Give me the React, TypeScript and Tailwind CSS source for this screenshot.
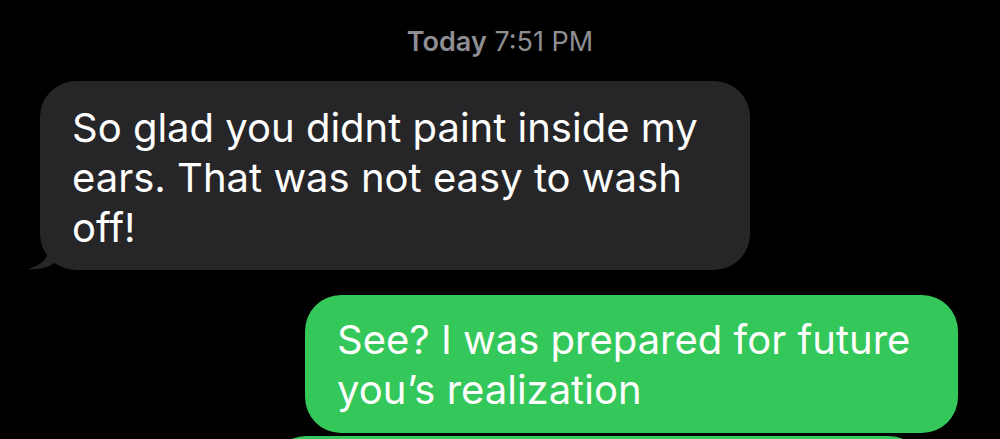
import React from 'react';

function Tail({color}: {color: string}) {
    return (
        <svg width="30" height="30" viewBox="0 0 30 30" className="absolute left-[-12px] bottom-0">
            <path d="M22 0 C22 14 18 24 0 29 C10 30 20 28 28 22 L28 0 Z" fill={color}/>
        </svg>
    );
}

export default function App() {
    return (
        <div className="w-[1000px] h-[439px] overflow-hidden bg-black text-white" style={{fontFamily: 'Inter, "Noto Sans", sans-serif'}}>
            <div className="pt-[26px] h-[81px] text-center text-[27px] leading-[32px] text-[#8e8e93]">
                <span className="font-semibold">Today</span> 7:51 PM
            </div>

            <div className="pl-[40px]">
                <div className="relative w-[710px] rounded-[36px] bg-[#262629] pl-[32px] pr-[30px] pt-[22px] pb-[17px] text-[40px] leading-[50px]">
                    <Tail color="#262629"/>
                    So glad you didnt paint inside my ears. That was not easy to wash off!
                </div>
            </div>

            <div className="flex flex-col items-end pr-[42px] mt-[25px]">
                <div className="w-[653px] rounded-[36px] bg-[#34c759] pl-[32px] pr-[30px] pt-[20px] pb-[18px] text-[40px] leading-[50px]">
                    See? I was prepared for future you’s realization
                </div>
                <div className="mt-[3px] mr-[33px] w-[655px] h-[60px] rounded-t-[36px] bg-[#34c759]"/>
            </div>
        </div>
    );
}
